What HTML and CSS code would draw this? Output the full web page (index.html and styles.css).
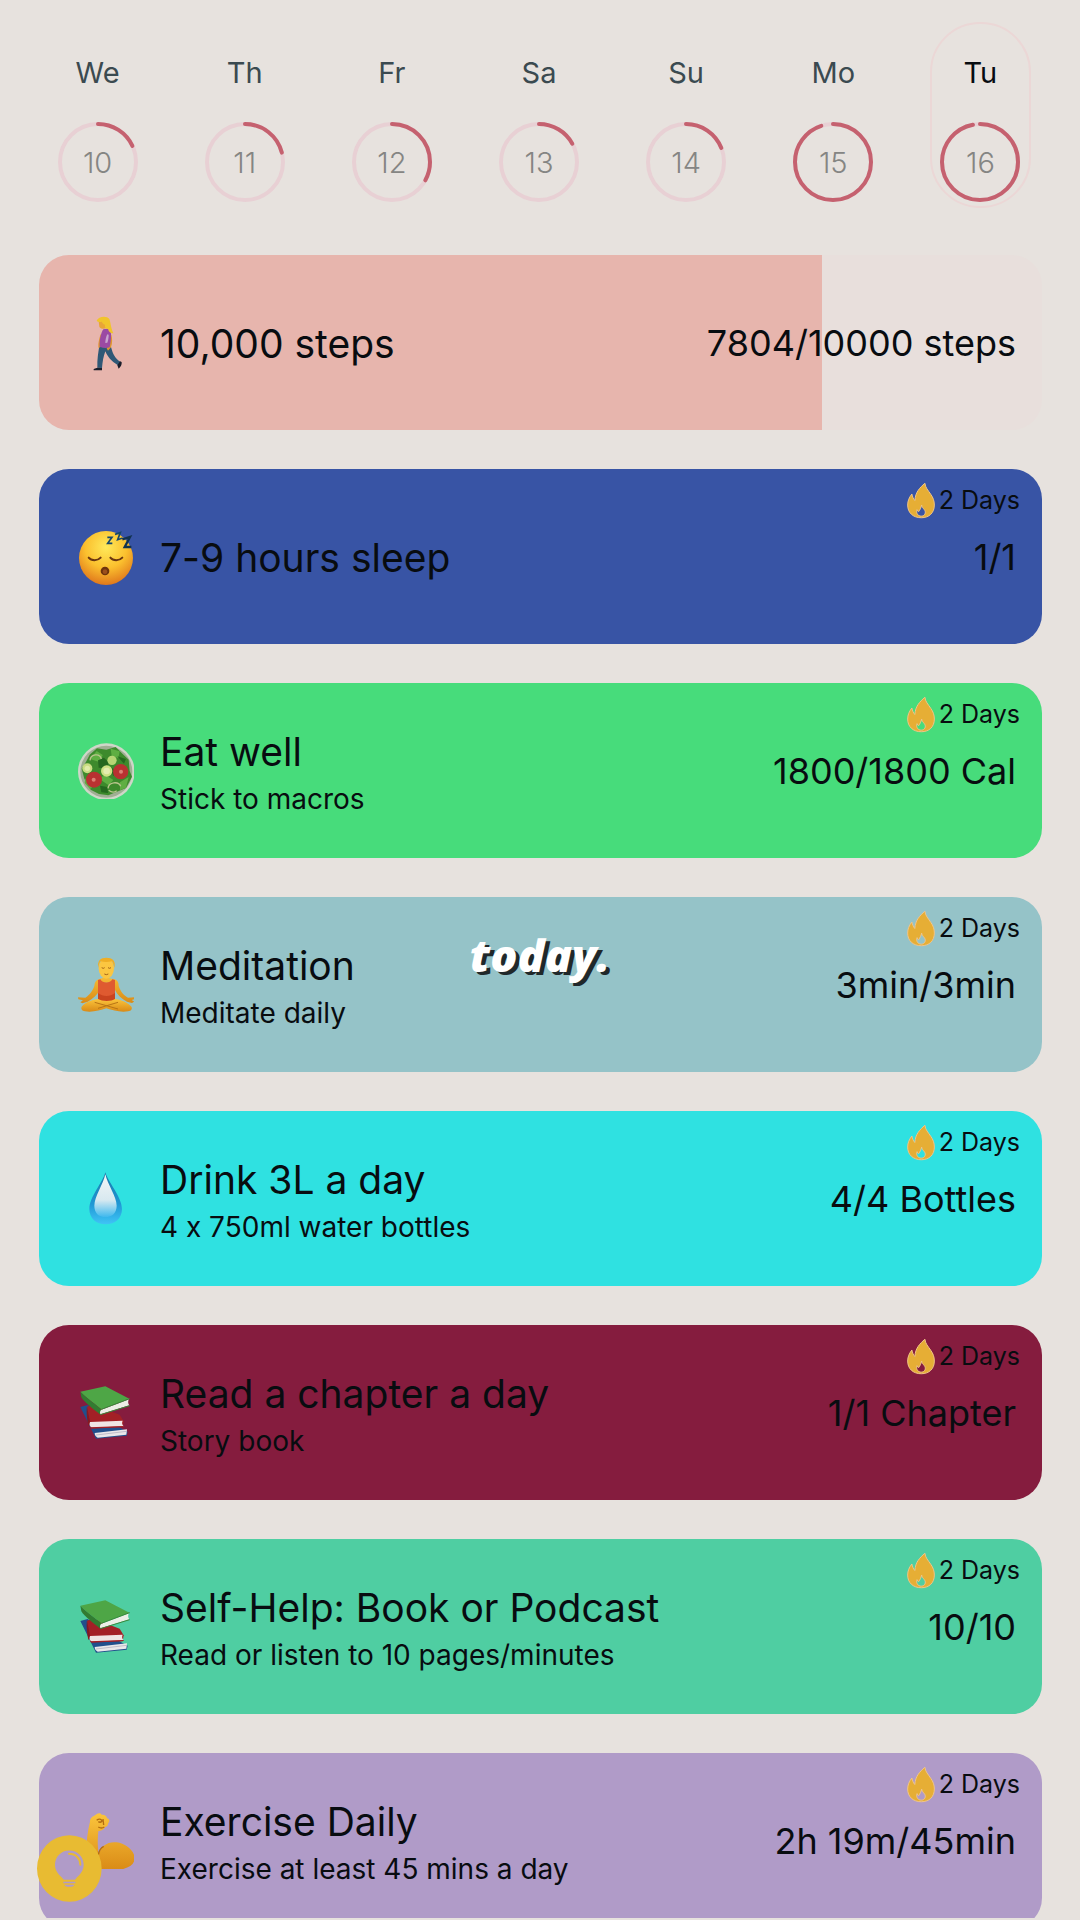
FILE: index.html
```html
<!DOCTYPE html>
<html lang="en">
<head>
<meta charset="utf-8">
<meta name="viewport" content="width=device-width, initial-scale=1">
<title>Daily habits</title>
<link rel="stylesheet" href="styles.css">
</head>
<body>
<svg class="defs" aria-hidden="true">
  <defs>
    <radialGradient id="face" cx=".5" cy=".3" r=".7"><stop offset="0" stop-color="#ffe95a"/><stop offset=".55" stop-color="#fbc02e"/><stop offset="1" stop-color="#e0781c"/></radialGradient>
    <linearGradient id="drop" x1="0" y1="0" x2="0" y2="1"><stop offset="0" stop-color="#1b78a8"/><stop offset=".6" stop-color="#1f97d4"/><stop offset="1" stop-color="#3fc4f6"/></linearGradient>
    <linearGradient id="shine" x1="0" y1="0" x2="0" y2="1"><stop offset="0" stop-color="#f3f6f6"/><stop offset=".6" stop-color="#d8e9f0"/><stop offset="1" stop-color="#3fb9ee"/></linearGradient>
    <linearGradient id="skin" x1="0" y1="0" x2="0" y2="1"><stop offset="0" stop-color="#fbc53c"/><stop offset="1" stop-color="#d98a16"/></linearGradient>
    <symbol id="flame" viewBox="0 0 86 112">
      <path fill-rule="evenodd" fill="#e6ae35" stroke="#f0c58a" stroke-width="3" d="M55 3c1 13 10 22 18 34 7 10 11 20 11 33 0 24-16 39-40 39C18 109 2 93 2 70c0-13 5-24 13-34 2 8 4 15 9 20C26 30 39 17 55 3zM45 70c-2 9-5 14-9 20-3-1-4-3-5-6-4 12 3 20 13 20 11 0 16-12 9-20-4-5-7-8-8-14z"/>
    </symbol>
    <symbol id="books" viewBox="0 0 168 168">
      <path fill="#214f8c" d="M7 66l22-6 98 68 22 12-3 12-92 9z"/>
      <path fill="#e9e7e9" d="M50 144l97-11-2 16-86 9c-6-3-9-8-9-14z"/>
      <path stroke="#a9a6b8" stroke-width="2" d="M54 150l92-11"/>
      <path fill="#a32026" d="M27 65l20-6 78 30 12 20-3 18-96 3z"/>
      <path fill="#861920" d="M27 65l10 50-5 8c-4-8-8-45-5-58z"/>
      <path fill="#f0e5e4" d="M36 111l98-4c-3 6-2 12 3 17l-96 4c-6-4-8-10-5-17z"/>
      <path fill="#a32026" d="M36 127l101-4v3l-96 5z"/>
      <path fill="#4ea646" d="M7 20l75-16 72 37-84 32C60 63 25 39 7 20z"/>
      <path fill="#327c31" d="M7 20c18 19 53 43 63 53l-3 16C48 74 18 51 10 37z"/>
      <path fill="#eceee6" d="M70 74l83-31c-4 6-3 13 1 18L68 88c-4-4-2-10 2-14z"/>
      <path fill="none" stroke="#39883a" stroke-width="3" d="M67 89l88-27M70 73l85-32"/>
    </symbol>
  </defs>
</svg>

<main class="app">
  <nav class="week" aria-label="Week">
    <button class="day" type="button"><span class="day-name">We</span><span class="ring"><svg viewBox="0 0 80 80" aria-hidden="true"><circle class="track" cx="40" cy="40" r="38"/><path class="arc" pathLength="100" stroke-dasharray="18 100" d="M40 2A38 38 0 0 1 40 78A38 38 0 0 1 40 2"/></svg><span class="date">10</span></span></button>
    <button class="day" type="button"><span class="day-name">Th</span><span class="ring"><svg viewBox="0 0 80 80" aria-hidden="true"><circle class="track" cx="40" cy="40" r="38"/><path class="arc" pathLength="100" stroke-dasharray="21 100" d="M40 2A38 38 0 0 1 40 78A38 38 0 0 1 40 2"/></svg><span class="date">11</span></span></button>
    <button class="day" type="button"><span class="day-name">Fr</span><span class="ring"><svg viewBox="0 0 80 80" aria-hidden="true"><circle class="track" cx="40" cy="40" r="38"/><path class="arc" pathLength="100" stroke-dasharray="33 100" d="M40 2A38 38 0 0 1 40 78A38 38 0 0 1 40 2"/></svg><span class="date">12</span></span></button>
    <button class="day" type="button"><span class="day-name">Sa</span><span class="ring"><svg viewBox="0 0 80 80" aria-hidden="true"><circle class="track" cx="40" cy="40" r="38"/><path class="arc" pathLength="100" stroke-dasharray="17 100" d="M40 2A38 38 0 0 1 40 78A38 38 0 0 1 40 2"/></svg><span class="date">13</span></span></button>
    <button class="day" type="button"><span class="day-name">Su</span><span class="ring"><svg viewBox="0 0 80 80" aria-hidden="true"><circle class="track" cx="40" cy="40" r="38"/><path class="arc" pathLength="100" stroke-dasharray="19 100" d="M40 2A38 38 0 0 1 40 78A38 38 0 0 1 40 2"/></svg><span class="date">14</span></span></button>
    <button class="day" type="button"><span class="day-name">Mo</span><span class="ring"><svg viewBox="0 0 80 80" aria-hidden="true"><circle class="track" cx="40" cy="40" r="38"/><path class="arc" pathLength="100" stroke-dasharray="95 100" d="M40 2A38 38 0 0 1 40 78A38 38 0 0 1 40 2"/></svg><span class="date">15</span></span></button>
    <button class="day day-current" type="button" aria-current="date"><span class="day-name">Tu</span><span class="ring"><svg viewBox="0 0 80 80" aria-hidden="true"><circle class="track" cx="40" cy="40" r="38"/><path class="arc" pathLength="100" stroke-dasharray="97 100" d="M40 2A38 38 0 0 1 40 78A38 38 0 0 1 40 2"/></svg><span class="date">16</span></span></button>
  </nav>

  <ul class="habits">
    <li class="habit steps">
      <div class="fill" style="width:78.04%"></div>
      <svg class="emoji" viewBox="0 0 168 168" aria-hidden="true">
        <path fill="#2f5876" d="M64 92c-3 20-7 40-6 66l14 1c2-20 4-34 10-50 8 18 16 28 38 42l7-11c-16-10-22-22-28-44z"/>
        <path fill="#1b1e2b" d="M47 162l11-4 14 1v7H47zM118 151l8-12 5 2c1 8-3 15-9 20z"/>
        <path fill="#e0972c" d="M68 58c-4 12-8 26-7 40l6-1c1-12 5-24 9-32zM94 60c4 12 2 26-8 40l4 7 9-10c5-14 4-26 1-38z"/>
        <path fill="#9b4aa3" d="M76 43c-8 12-12 32-11 52 10 4 20 5 30 2 4-20 6-38 2-52-6-5-14-5-21-2z"/>
        <path fill="#c8a4d0" d="M88 58c-4 8-6 18-6 26l6-1c3-8 4-16 4-24z"/>
        <path fill="#e9a536" d="M62 18h24v20c-8 5-18 4-22-3z"/>
        <path fill="#f1c42b" d="M56 17C61 4 86 1 94 12c4 10 4 24 12 43-8 0-14-4-16-14-8 3-10-5-9-12-6-2-8-6-10-9-5 2-10 2-15-3z"/>
      </svg>
      <div class="text"><h2>10,000 steps</h2></div>
      <span class="value">7804/10000 steps</span>
    </li>
    <li class="habit sleep">
      <svg class="emoji" viewBox="0 0 168 168" aria-hidden="true">
        <circle cx="84" cy="87" r="81" fill="url(#face)"/>
        <path fill="none" stroke="#6a3610" stroke-width="6" stroke-linecap="round" d="M32 86c8 10 27 10 36 0M97 86c8 10 27 10 36 0"/>
        <circle cx="81" cy="126" r="13" fill="#6f340c"/><circle cx="81" cy="128" r="7" fill="#9c4f1c"/>
        <path fill="none" stroke="#17486b" stroke-width="5" d="M88 25h14L89 43h14M111 16l16-5-8 21 15-5"/>
        <path fill="none" stroke="#12324f" stroke-width="7" d="M133 31l23-7-16 30h20"/>
      </svg>
      <div class="text"><h2>7-9 hours sleep</h2></div>
      <span class="value">1/1</span>
      <span class="streak"><svg aria-hidden="true"><use href="#flame"/></svg>2 Days</span>
    </li>
    <li class="habit eat">
      <svg class="emoji" viewBox="0 0 168 168" aria-hidden="true">
        <circle cx="85" cy="86" r="85" fill="#cfd6c8"/><circle cx="85" cy="86" r="78" fill="#9fae93"/>
        <path fill="#3d8a2c" d="M35 35l22-19 28 4 28-8 21 21 18 17 3 34 7 17-18 34-29 12-24 10-28-4-25-13-19-33-8-30 14-22z"/>
        <path fill="#5fae42" d="M36 48l20-24 18 12-8 22zM98 17l27 8-4 20-20-6zM60 105l24-8 22 14-14 16zM126 118l26-16-8 32-18 8zM22 106l20 28-6 4-16-18z"/>
        <path fill="#25681f" d="M60 52l18-8 16 16-12 16-20-2zM96 72l18 10-8 18zM66 128l22 4 2 18-20-2zM118 40l26 8-6 14z"/>
        <circle cx="102" cy="52" r="14" fill="#b7d574"/><circle cx="28" cy="76" r="15" fill="#c9dc82"/><circle cx="86" cy="84" r="17" fill="#cee184"/>
        <circle cx="28" cy="76" r="8" fill="#e1eba9"/><circle cx="86" cy="84" r="10" fill="#e4edaf"/>
        <circle cx="48" cy="110" r="24" fill="#b93131"/><circle cx="128" cy="86" r="23" fill="#b93131"/>
        <circle cx="47" cy="110" r="6" fill="#dc8074"/><circle cx="129" cy="86" r="6" fill="#dc8074"/>
        <path fill="none" stroke="#b9c48c" stroke-width="4" d="M36 52c2-20 30-22 34-4M90 136c2-20 32-22 38-6M92 142c8 6 18 6 24 1"/>
      </svg>
      <div class="text"><h2>Eat well</h2><p>Stick to macros</p></div>
      <span class="value">1800/1800 Cal</span>
      <span class="streak"><svg aria-hidden="true"><use href="#flame"/></svg>2 Days</span>
    </li>
    <li class="habit meditate">
      <svg class="emoji" viewBox="0 0 168 168" aria-hidden="true">
        <path fill="url(#skin)" d="M62 67c-9 3-12 10-13 20-5 14-12 25-27 35L0 121l1 6 14 3-8 6 6 3 16-5c16-8 29-20 37-37l4-20h36l4 20c8 17 20 29 37 37l15 4 7-4-8-5 10-3-2-5-19 1c-16-9-23-21-28-35 0-10-3-17-12-20l-20-4V45H76v17z"/>
        <path fill="#df5a30" d="M67 67c7 13 29 13 36 0l8 2v63H60V69z"/>
        <path fill="#c9441f" d="M60 108c15 12 36 12 51 0v24H60z"/>
        <path fill="url(#skin)" d="M60 126c-16 2-38 9-48 22-5 7 0 14 9 15 22 3 45-2 64-9 20 7 42 12 65 9 10-1 15-8 9-15-11-13-32-20-48-22-9 7-38 8-51 0z"/>
        <path fill="none" stroke="#b87415" stroke-width="3" d="M50 136l70 20M120 136l-60 18"/>
        <ellipse cx="85" cy="34" rx="23" ry="31" fill="#fbc641"/>
        <path fill="#efae25" d="M61 33C57 10 68 2 85 2s30 8 24 31c-2-11-5-17-7-20-12 3-24 3-34 0-4 5-6 10-7 20z"/>
        <path fill="none" stroke="#a46517" stroke-width="3" d="M71 32q5 4 9 0M90 32q5 4 9 0M79 51q6 4 12 0"/>
      </svg>
      <div class="text"><h2>Meditation</h2><p>Meditate daily</p></div>
      <span class="value">3min/3min</span>
      <span class="streak"><svg aria-hidden="true"><use href="#flame"/></svg>2 Days</span>
    </li>
    <li class="habit drink">
      <svg class="emoji" viewBox="0 0 168 168" aria-hidden="true">
        <path fill="url(#drop)" d="M82 4c7 28 50 74 50 110 0 28-21 46-49 46s-49-18-49-46C34 78 75 34 82 4z"/>
        <path fill="url(#shine)" d="M82 10c6 30 34 66 34 94 0 22-14 34-34 34s-33-12-33-34c0-28 27-64 33-94z"/>
      </svg>
      <div class="text"><h2>Drink 3L a day</h2><p>4 x 750ml water bottles</p></div>
      <span class="value">4/4 Bottles</span>
      <span class="streak"><svg aria-hidden="true"><use href="#flame"/></svg>2 Days</span>
    </li>
    <li class="habit read">
      <svg class="emoji" aria-hidden="true"><use href="#books"/></svg>
      <div class="text"><h2>Read a chapter a day</h2><p>Story book</p></div>
      <span class="value">1/1 Chapter</span>
      <span class="streak"><svg aria-hidden="true"><use href="#flame"/></svg>2 Days</span>
    </li>
    <li class="habit selfhelp">
      <svg class="emoji" aria-hidden="true"><use href="#books"/></svg>
      <div class="text"><h2>Self-Help: Book or Podcast</h2><p>Read or listen to 10 pages/minutes</p></div>
      <span class="value">10/10</span>
      <span class="streak"><svg aria-hidden="true"><use href="#flame"/></svg>2 Days</span>
    </li>
    <li class="habit exercise">
      <svg class="emoji" viewBox="0 0 168 168" aria-hidden="true">
        <path fill="url(#skin)" d="M36 26c0-11 8-16 15-19 8-8 16-8 20-2 10-1 16 5 16 11 8 1 9 10 4 14-1 8-5 12-10 12-4 10-14 12-20 12-2 20-3 40 1 70 6-24 26-39 54-36 26 3 51 23 54 45 1 18-12 30-38 36-34 8-74 4-104-8-6-50-2-94 8-135z"/>
        <path fill="none" stroke="#b36c10" stroke-width="4" d="M56 22c7-6 14-4 16 2-3 4-8 4-11 2M75 18l2 18M61 42c6 4 12 4 18 0M61 126c2-14 8-22 16-26"/>
      </svg>
      <div class="text"><h2>Exercise Daily</h2><p>Exercise at least 45 mins a day</p></div>
      <span class="value">2h 19m/45min</span>
      <span class="streak"><svg aria-hidden="true"><use href="#flame"/></svg>2 Days</span>
    </li>
  </ul>

  <p class="caption">today.</p>
  <button class="tips" type="button" aria-label="Tips">
    <svg viewBox="0 0 195 200" aria-hidden="true">
      <path fill="#e8bb32" fill-rule="evenodd" d="M97 0a97 100 0 1 1 0 200a97 100 0 1 1 0-200zM97 46c-25 0-43 19-43 43 0 16 9 28 20 37l6 8h34l6-8c11-9 20-21 20-37 0-24-18-43-43-43zM79 140h36v4H79zM82 149c3 6 8 6 15 6s12 0 15-6z"/>
      <path fill="none" stroke="#e8bb32" stroke-width="6" stroke-linecap="round" d="M96 56c21 0 34 14 34 33"/>
    </svg>
  </button>
</main>
</body>
</html>
```
FILE: styles.css
```css
* {
  box-sizing: border-box;
}

body {
  margin: 0;
  background: #e7e2de;
  color: #080c10;
  font-family: Inter, "Liberation Sans", sans-serif;
  font-variant-ligatures: no-contextual;
}

h2,
p,
ul {
  margin: 0;
  padding: 0;
  font-weight: 400;
}

button {
  border: 0;
  padding: 0;
  background: none;
  color: inherit;
  font: inherit;
}

.defs {
  position: absolute;
  width: 0;
  height: 0;
}

.app {
  position: relative;
  display: flex;
  flex-direction: column;
  height: 100vh;
  padding: 22px 0 2px;
  overflow: hidden;
}

/* Week strip */
.week {
  display: grid;
  grid-template-columns: repeat(7, 1fr);
  justify-items: center;
  padding: 0 26px 0 24px;
}

.day {
  display: flex;
  flex-direction: column;
  align-items: center;
  gap: 31px;
  width: 101px;
  padding: 31px 0 4px;
  border: 2px solid transparent;
  border-radius: 50px;
  color: #3b4a50;
}

.day-current {
  border-color: #ebd7d6;
  color: #080c10;
}

.day-name {
  font-size: 29px;
  line-height: 36px;
}

.ring {
  display: grid;
  place-items: center;
  width: 80px;
  height: 80px;
}

.ring > * {
  grid-area: 1 / 1;
}

.ring svg {
  width: 80px;
  height: 80px;
}

.track {
  fill: none;
  stroke: #e8d0d4;
  stroke-width: 4;
}

.arc {
  fill: none;
  stroke: #c5616f;
  stroke-width: 4;
  stroke-linecap: round;
}

.date {
  padding-top: 1px;
  color: #858583;
  font-size: 29px;
  font-weight: 300;
  line-height: 36px;
}

/* Habit cards */
.habits {
  display: flex;
  flex: 1;
  flex-direction: column;
  gap: 39px;
  min-height: 0;
  margin-top: 47px;
  padding: 0 38px 0 39px;
  overflow: hidden;
  list-style: none;
}

.habit {
  position: relative;
  display: flex;
  flex: none;
  align-items: center;
  gap: 26px;
  height: 175px;
  padding: 0 26px 0 39px;
  border-radius: 30px;
  overflow: hidden;
}

.emoji {
  position: relative;
  flex: none;
  width: 56px;
  height: 56px;
}

.text {
  position: relative;
  display: flex;
  flex: 1;
  flex-direction: column;
  gap: 6px;
  padding-top: 2px;
}

.text h2 {
  font-size: 39px;
  line-height: 48px;
}

.text p {
  font-size: 28px;
  line-height: 34px;
}

.value {
  position: relative;
  font-size: 36px;
  line-height: 44px;
}

.fill {
  position: absolute;
  inset: 0 auto 0 0;
  background: #e7b5ad;
}

.streak {
  position: absolute;
  top: 12px;
  right: 22px;
  display: flex;
  align-items: center;
  gap: 4px;
  font-size: 25px;
  line-height: 38px;
}

.streak svg {
  width: 28px;
  height: 37px;
}

.steps { background: #e8dfdc; }
.sleep { background: #3854a5; }
.eat { background: #47dc7b; }
.meditate { background: #95c3c8; }
.drink { background: #2fe1e1; }
.read { background: #851c3e; }
.selfhelp { background: #4fcea2; }
.exercise { background: #b09bc8; }

/* Overlays */
.caption {
  position: absolute;
  top: 50%;
  left: 50%;
  padding-bottom: 10px;
  color: #fff;
  font-family: "Open Sans", sans-serif;
  font-size: 45px;
  font-style: italic;
  font-weight: 800;
  line-height: 60px;
  text-shadow: 4px 3px 0 #20282a;
  transform: translate(-50%, -50%);
}

.tips {
  position: absolute;
  bottom: 18px;
  left: 37px;
  width: 65px;
  height: 67px;
}

.tips svg {
  display: block;
  width: 100%;
  height: 100%;
}
```
